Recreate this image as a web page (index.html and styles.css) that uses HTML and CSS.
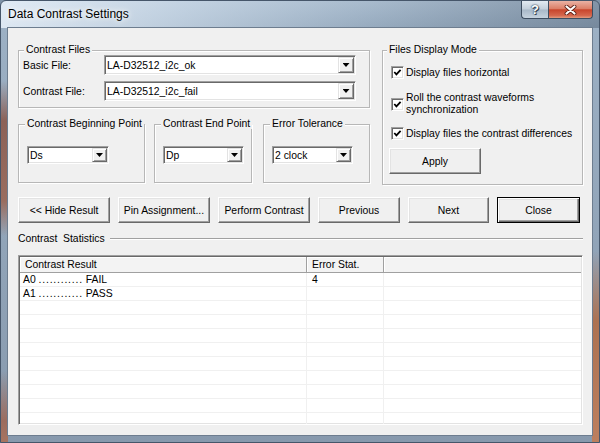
FILE: index.html
```html
<!DOCTYPE html>
<html>
<head>
<meta charset="utf-8">
<title>Data Contrast Settings</title>
<link rel="stylesheet" href="styles.css">
</head>
<body>
<div class="window">
  <div class="titlebar">
    <span class="title">Data Contrast Settings</span>
    <div class="caption-btns">
      <span class="cap help">?</span>
      <span class="cap close">
        <svg width="13" height="10" viewBox="0 0 13 10"><path d="M2.5 1.5 L10.5 8.5 M10.5 1.5 L2.5 8.5" stroke="#5b1e14" stroke-width="3.8" stroke-linecap="round"/><path d="M2.5 1.5 L10.5 8.5 M10.5 1.5 L2.5 8.5" stroke="#fff" stroke-width="2.2" stroke-linecap="round"/></svg>
      </span>
    </div>
  </div>
  <div class="client">
    <div class="top">
      <div class="left-col">
        <fieldset class="group files">
          <legend>Contrast Files</legend>
          <div class="file-row">
            <span class="lbl">Basic File:</span>
            <div class="combo wide"><span class="val">LA-D32512_i2c_ok</span><span class="drop"></span></div>
          </div>
          <div class="file-row">
            <span class="lbl">Contrast File:</span>
            <div class="combo wide"><span class="val">LA-D32512_i2c_fail</span><span class="drop"></span></div>
          </div>
        </fieldset>
        <div class="points">
          <fieldset class="group pt begin">
            <legend>Contrast Beginning Point</legend>
            <div class="combo small"><span class="val">Ds</span><span class="drop"></span></div>
          </fieldset>
          <fieldset class="group pt end">
            <legend>Contrast End Point</legend>
            <div class="combo small"><span class="val">Dp</span><span class="drop"></span></div>
          </fieldset>
          <fieldset class="group pt tol">
            <legend>Error Tolerance</legend>
            <div class="combo small"><span class="val">2 clock</span><span class="drop"></span></div>
          </fieldset>
        </div>
      </div>
      <fieldset class="group mode">
        <legend>Files Display Mode</legend>
        <label class="check r1"><span class="box"><svg width="9" height="9" viewBox="0 0 9 9"><polyline points="1.3,4 3.4,6.3 7.6,1.8" fill="none" stroke="#000" stroke-width="1.8"/></svg></span><span class="ctext">Display files horizontal</span></label>
        <label class="check r2"><span class="box"><svg width="9" height="9" viewBox="0 0 9 9"><polyline points="1.3,4 3.4,6.3 7.6,1.8" fill="none" stroke="#000" stroke-width="1.8"/></svg></span><span class="ctext">Roll the contrast waveforms<br>synchronization</span></label>
        <label class="check r3"><span class="box"><svg width="9" height="9" viewBox="0 0 9 9"><polyline points="1.3,4 3.4,6.3 7.6,1.8" fill="none" stroke="#000" stroke-width="1.8"/></svg></span><span class="ctext">Display files the contrast differences</span></label>
        <button class="btn apply">Apply</button>
      </fieldset>
    </div>
    <div class="buttons">
      <button class="btn b-hide">&lt;&lt; Hide Result</button>
      <button class="btn b-pin">Pin Assignment...</button>
      <button class="btn b-perform">Perform Contrast</button>
      <button class="btn b-prev">Previous</button>
      <button class="btn b-next">Next</button>
      <button class="btn b-close default">Close</button>
    </div>
    <div class="stats-label"><span>Contrast&nbsp; Statistics</span></div>
    <div class="list">
      <table>
        <colgroup><col class="c1"><col class="c2"><col class="c3"></colgroup>
        <thead>
          <tr><th>Contrast Result</th><th>Error Stat.</th><th></th></tr>
        </thead>
        <tbody>
          <tr><td>A0 <span class="dots">............</span> FAIL</td><td>4</td><td></td></tr>
          <tr><td>A1 <span class="dots">............</span> PASS</td><td></td><td></td></tr>
          <tr><td></td><td></td><td></td></tr>
          <tr><td></td><td></td><td></td></tr>
          <tr><td></td><td></td><td></td></tr>
          <tr><td></td><td></td><td></td></tr>
          <tr><td></td><td></td><td></td></tr>
          <tr><td></td><td></td><td></td></tr>
          <tr><td></td><td></td><td></td></tr>
          <tr><td></td><td></td><td></td></tr>
          <tr><td></td><td></td><td></td></tr>
        </tbody>
      </table>
    </div>
  </div>
</div>
</body>
</html>
```

FILE: styles.css
```css
html, body {
  margin: 0;
  padding: 0;
  background: #7f93a8;
}
body {
  font-family: "Liberation Sans", Arial, sans-serif;
  font-size: 10.4px;
  color: #000;
}
.window {
  width: 600px;
  height: 443px;
  box-sizing: border-box;
  border: 1px solid #46566a;
  border-radius: 6px 6px 0 0;
  overflow: hidden;
  background:
    linear-gradient(90deg, rgba(232,241,250,0.85) 0%, rgba(205,219,233,0.6) 30%, rgba(130,150,170,0.25) 62%, rgba(70,88,108,0.45) 100%) top / 100% 27px no-repeat,
    linear-gradient(180deg, rgba(120,80,70,0) 80px, #8c6157 120px, #9a6d5f 200px, rgba(120,80,70,0) 235px, rgba(120,80,70,0) 370px, #9c6c5e 420px, #a87560 443px) left / 7px 100% no-repeat,
    linear-gradient(180deg, rgba(150,100,80,0) 250px, #ad7252 320px, #bd7f5e 443px) right / 7px 100% no-repeat,
    linear-gradient(180deg, #b5c7d9 0, #9cb0c4 28px, #8799ad 100%);
}
.titlebar {
  height: 26px;
  display: flex;
  align-items: flex-start;
}
.title {
  padding: 6px 0 0 7px;
  line-height: 15px;
  font-size: 12px;
  color: #000;
  text-shadow: 0 0 5px #fff, 0 0 8px rgba(255,255,255,0.9);
  margin-right: auto;
}
.caption-btns {
  display: flex;
  margin-right: 6px;
}
.cap {
  box-sizing: border-box;
  height: 18px;
  display: flex;
  align-items: center;
  justify-content: center;
  border: 1px solid #3d4d60;
  border-top: none;
}
.help {
  width: 27px;
  border-radius: 0 0 0 4px;
  border-right: none;
  background: linear-gradient(180deg, #e2eaf2 0%, #c3cfdb 48%, #a8b8c8 52%, #c6d3df 100%);
  color: #fff;
  font-weight: bold;
  font-size: 13px;
  text-shadow: 0 0 1px #2a3a4c, 0 0 2px #2a3a4c, 1px 1px 0 #3a4a5c;
}
.close {
  width: 45px;
  border-radius: 0 0 4px 0;
  background: linear-gradient(180deg, #eab2a4 0%, #dc7f68 45%, #c8452c 52%, #d5664c 85%, #e39a7e 100%);
}
.client {
  box-sizing: border-box;
  height: 409px;
  margin: 0 6px;
  border: 1px solid #6d7d8f;
  background: #f0f0f0;
  padding: 17px 9px 0 10px;
}
.top {
  display: flex;
  gap: 12px;
  align-items: stretch;
}
.left-col {
  width: 352px;
  display: flex;
  flex-direction: column;
}
.group {
  margin: 0;
  padding: 0;
  min-width: 0;
  border: 1px solid #b7b7b7;
  box-shadow: inset 1px 1px #fff, 1px 1px #fff;
}
.group legend {
  padding: 0 2px;
  line-height: 10px;
  background: #f0f0f0;
  white-space: nowrap;
}
.files {
  padding: 0 0 6px 4px;
  display: flex;
  flex-direction: column;
  gap: 6px;
}
.files legend {
  margin-left: 1px;
}
.file-row {
  display: flex;
  align-items: center;
}
.lbl {
  width: 81px;
}
.combo {
  box-sizing: border-box;
  display: flex;
  align-items: stretch;
  background: #fff;
  border: 1px solid;
  border-color: #a0a0a0 #fff #fff #a0a0a0;
  box-shadow: inset 1px 1px #696969, inset -1px -1px #e3e3e3;
  padding: 1px;
}
.combo .val {
  flex: 1;
  padding-left: 1px;
  display: flex;
  align-items: center;
  white-space: nowrap;
}
.combo.wide {
  width: 252px;
  height: 20px;
}
.combo.small {
  width: 82px;
  height: 18px;
}
.drop {
  box-sizing: border-box;
  width: 16px;
  background: #f0f0f0;
  border: 1px solid;
  border-color: #e3e3e3 #696969 #696969 #e3e3e3;
  box-shadow: inset 1px 1px #fff, inset -1px -1px #a0a0a0;
  display: flex;
  align-items: center;
  justify-content: center;
}
.combo.small .drop {
  width: 15px;
}
.drop::after {
  content: "";
  width: 7px;
  height: 4px;
  background: #000;
  clip-path: polygon(0 0, 100% 0, 50% 100%);
}
.points {
  display: flex;
  margin-top: 11px;
}
.pt {
  padding: 17px 0 18px 8px;
}
.pt legend {
  margin-left: -2px;
}
.begin { width: 127px; box-sizing: border-box; }
.end { width: 98px; box-sizing: border-box; margin-left: 9px; }
.tol { width: 107px; box-sizing: border-box; margin-left: 11px; }
.end .combo.small, .tol .combo.small { width: 81px; }
.mode {
  flex: 1;
  padding: 11px 0 10px 8px;
  display: flex;
  flex-direction: column;
  align-items: flex-start;
}
.mode legend {
  margin-left: -4px;
}
.check {
  display: flex;
  align-items: center;
  gap: 2px;
  line-height: 12px;
}
.check.r2 { margin-top: 13px; }
.check.r3 { margin-top: 11px; }
.box {
  box-sizing: border-box;
  width: 13px;
  height: 13px;
  flex: none;
  background: #fff;
  border: 1px solid;
  border-color: #a0a0a0 #fff #fff #a0a0a0;
  box-shadow: inset 1px 1px #696969, inset -1px -1px #e3e3e3;
  display: flex;
  align-items: center;
  justify-content: center;
}
.box svg { display: block; }
.btn {
  box-sizing: border-box;
  height: 26px;
  margin: 0;
  padding: 0;
  font-family: inherit;
  font-size: 10.4px;
  color: #000;
  background: #f0f0f0;
  border: 1px solid;
  border-color: #fff #696969 #696969 #fff;
  box-shadow: inset -1px -1px #a0a0a0, inset 1px 1px #e3e3e3;
  white-space: nowrap;
}
.btn.default {
  border: 1px solid #000;
  box-shadow: inset 1px 1px #fff, inset -1px -1px #696969, inset -2px -2px #a0a0a0, inset 2px 2px #e3e3e3;
}
.apply {
  width: 92px;
  margin: 8px 0 0 -2px;
}
.buttons {
  display: flex;
  gap: 8px;
  margin-top: 12px;
}
.b-hide, .b-pin, .b-perform { width: 92px; }
.b-prev { width: 82px; }
.b-next { width: 81px; }
.b-close { width: 83px; }
.stats-label {
  display: flex;
  align-items: center;
  gap: 5px;
  margin-top: 10px;
  line-height: 12px;
}
.stats-label::after {
  content: "";
  flex: 1;
  height: 0;
  border-top: 1px solid #a0a0a0;
  border-bottom: 1px solid #fff;
}
.list {
  box-sizing: border-box;
  height: 170px;
  margin-top: 10px;
  background: #fff;
  border: 1px solid;
  border-color: #a0a0a0 #fff #fff #a0a0a0;
  box-shadow: inset 1px 1px #696969, inset -1px -1px #e3e3e3;
  padding: 1px;
  overflow: hidden;
}
.list table {
  width: 100%;
  table-layout: fixed;
  border-collapse: separate;
  border-spacing: 0;
}
col.c1 { width: 287px; }
col.c2 { width: 77px; }
th {
  text-align: left;
  font-weight: normal;
  line-height: 15px;
  padding: 0 0 0 5px;
  background: #f3f3f3;
  border-right: 1px solid #a0a0a0;
  border-bottom: 1px solid #a0a0a0;
  box-shadow: inset 1px 1px #fff;
  white-space: nowrap;
}
th:last-child { border-right: none; }
td {
  line-height: 13px;
  height: 13px;
  padding: 0 0 0 3px;
  border-right: 1px solid #f0f0f0;
  border-bottom: 1px solid #f0f0f0;
  white-space: nowrap;
}
td:nth-child(2) { padding-left: 5px; }
td:last-child { border-right: none; }
.dots {
  letter-spacing: 0.8px;
}
```
